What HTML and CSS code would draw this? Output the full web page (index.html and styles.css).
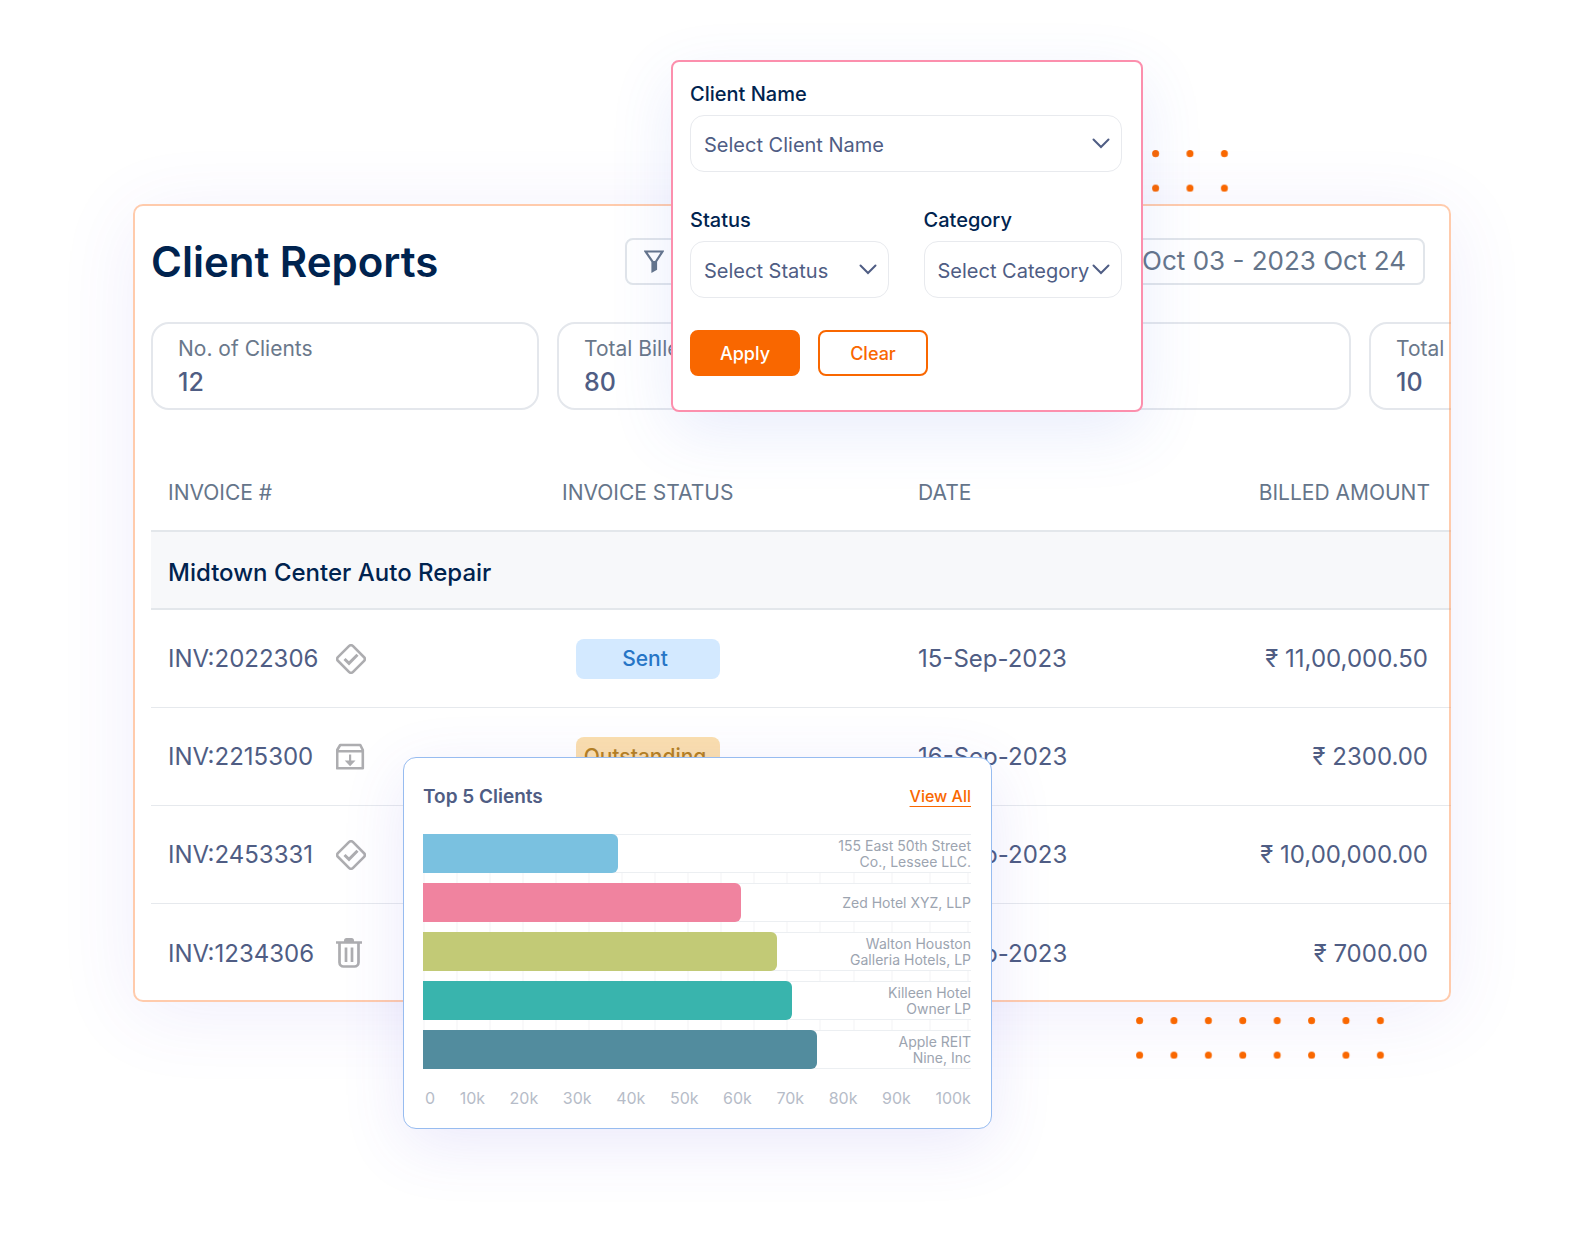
FILE: index.html
```html
<!DOCTYPE html>
<html lang="en">
<head>
<meta charset="utf-8">
<title>Client Reports</title>
<link rel="stylesheet" href="styles.css">
</head>
<body>
<svg width="0" height="0" class="sprite" aria-hidden="true">
  <symbol id="chevron" viewBox="0 0 18 11"><path d="M1.500 1.500 9 9l7.500-7.500" fill="none" stroke="currentColor" stroke-width="2" stroke-linecap="round"/></symbol>
  <symbol id="approved" viewBox="0 0 30 30"><path d="M13.200 1.900 1.900 13.200a2.500 2.500 0 0 0 0 3.600L13.200 28.100a2.500 2.500 0 0 0 3.600 0L28.100 16.800a2.500 2.500 0 0 0 0-3.600L16.800 1.900a2.500 2.500 0 0 0-3.600 0Z" fill="none" stroke="currentColor" stroke-width="2.600"/><path d="m8.500 15 4.500 4.300 8.500-8.600" fill="none" stroke="currentColor" stroke-width="3"/></symbol>
  <symbol id="archive" viewBox="0 0 30 30"><path d="M4.200 3h20.100l2.500 5v18.300H1.200V8Z M1.200 9.300h25.600" fill="none" stroke="currentColor" stroke-width="2.600" stroke-linejoin="round"/><path d="M13 12.500h2.200v6h4.300l-5.400 5.800-5.400-5.800H13Z" fill="currentColor"/></symbol>
  <symbol id="trash" viewBox="0 0 30 30"><path d="M0 4.500h26M3.500 4.500v20a4 4 0 0 0 4 4h11a4 4 0 0 0 4-4v-20M10 9.500v14.500M16 9.500v14.500" fill="none" stroke="currentColor" stroke-width="2.700"/><path d="M8 4.500V2.500A2.500 2.500 0 0 1 10.500 0h5A2.500 2.500 0 0 1 18 2.500v2Z" fill="currentColor"/></symbol>
</svg>

<main class="stage">
  <section class="report">
    <header class="report-head">
      <h1>Client Reports</h1>
      <div class="toolbar">
        <button class="tool tool-filter" type="button" aria-label="Filter">
          <svg width="20" height="23" viewBox="0 0 20 23"><path d="M1.500 1.500h17L12 11.500v7.500L8.500 21V11.500Z" fill="none" stroke="currentColor" stroke-width="2.200"/><path d="M8 11h4.500v8L8 22Z" fill="currentColor"/></svg>
        </button>
        <button class="tool" type="button">2023 Oct 03 - 2023 Oct 24</button>
      </div>
    </header>

    <div class="stats">
      <div class="stat"><span class="stat-label">No. of Clients</span><span class="stat-value">12</span></div>
      <div class="stat"><span class="stat-label">Total Billed</span><span class="stat-value">80</span></div>
      <div class="stat"></div>
      <div class="stat"><span class="stat-label">Total</span><span class="stat-value">10</span></div>
    </div>

    <table class="invoices">
      <colgroup><col class="col-invoice"><col class="col-status"><col class="col-date"><col></colgroup>
      <thead>
        <tr><th>INVOICE #</th><th>INVOICE STATUS</th><th>DATE</th><th class="amount">BILLED AMOUNT</th></tr>
      </thead>
      <tbody>
        <tr class="group"><th colspan="4">Midtown Center Auto Repair</th></tr>
        <tr>
          <td><div class="invoice"><span>INV:2022306</span><svg class="state"><use href="#approved"/></svg></div></td>
          <td><span class="badge sent">Sent</span></td><td>15-Sep-2023</td><td class="amount">₹ 11,00,000.50</td>
        </tr>
        <tr>
          <td><div class="invoice"><span>INV:2215300</span><svg class="state"><use href="#archive"/></svg></div></td>
          <td><span class="badge outstanding">Outstanding</span></td><td>16-Sep-2023</td><td class="amount">₹ 2300.00</td>
        </tr>
        <tr>
          <td><div class="invoice"><span>INV:2453331</span><svg class="state"><use href="#approved"/></svg></div></td>
          <td></td><td>16-Sep-2023</td><td class="amount">₹ 10,00,000.00</td>
        </tr>
        <tr>
          <td><div class="invoice"><span>INV:1234306</span><svg class="state"><use href="#trash"/></svg></div></td>
          <td></td><td>16-Sep-2023</td><td class="amount">₹ 7000.00</td>
        </tr>
      </tbody>
    </table>
  </section>

  <svg class="dots dots-top" width="77" height="42" aria-hidden="true">
    <defs><pattern id="dot" width="34.400" height="34.600" patternUnits="userSpaceOnUse"><circle cx="3.600" cy="3.600" r="3.500" fill="#f96700"/></pattern></defs>
    <rect width="77" height="42" fill="url(#dot)"/>
  </svg>
  <svg class="dots dots-bottom" width="249" height="42" aria-hidden="true"><rect width="249" height="42" fill="url(#dot)"/></svg>

  <form class="filters">
    <div class="field wide">
      <label for="client">Client Name</label>
      <div class="select"><select id="client"><option>Select Client Name</option></select><svg><use href="#chevron"/></svg></div>
    </div>
    <div class="field">
      <label for="status">Status</label>
      <div class="select"><select id="status"><option>Select Status</option></select><svg><use href="#chevron"/></svg></div>
    </div>
    <div class="field">
      <label for="category">Category</label>
      <div class="select"><select id="category"><option>Select Category</option></select><svg><use href="#chevron"/></svg></div>
    </div>
    <div class="actions">
      <button class="btn primary" type="button">Apply</button>
      <button class="btn" type="button">Clear</button>
    </div>
  </form>

  <section class="top-clients">
    <header class="top-head"><h2>Top 5 Clients</h2><a href="#">View All</a></header>
    <div class="bars">
      <div class="bar-row"><span class="bar blue" style="width:35.600%"></span><span class="bar-name">155 East 50th Street<br>Co., Lessee LLC.</span></div>
      <div class="bar-row"><span class="bar pink" style="width:58%"></span><span class="bar-name">Zed Hotel XYZ, LLP</span></div>
      <div class="bar-row"><span class="bar olive" style="width:64.600%"></span><span class="bar-name">Walton Houston<br>Galleria Hotels, LP</span></div>
      <div class="bar-row"><span class="bar teal" style="width:67.300%"></span><span class="bar-name">Killeen Hotel<br>Owner LP</span></div>
      <div class="bar-row"><span class="bar slate" style="width:71.900%"></span><span class="bar-name">Apple REIT<br>Nine, Inc</span></div>
    </div>
    <div class="axis"><span>0</span><span>10k</span><span>20k</span><span>30k</span><span>40k</span><span>50k</span><span>60k</span><span>70k</span><span>80k</span><span>90k</span><span>100k</span></div>
  </section>
</main>
</body>
</html>
```
FILE: styles.css
```css
* { box-sizing: border-box; }

body {
  margin: 0;
  background: #fff;
  color: #4f5d84;
  font-family: Inter, "Liberation Sans", sans-serif;
}

button, select { font: inherit; color: inherit; background: none; }

.sprite { position: absolute; }

.stage {
  position: relative;
  min-height: 100vh;
  padding: 204px 131px 237px 133px;
  overflow: hidden;
}

/* Report card: the border lies over the content so cut-off rows run under it */
.report {
  position: relative;
  padding: 34px 0 0 18px;
  border-radius: 10px;
  background: #fff;
  box-shadow: 0 12px 80px rgba(90, 70, 220, 0.09);
}
.report::after {
  content: "";
  position: absolute;
  inset: 0;
  border: 2px solid rgba(255, 140, 70, 0.45);
  border-radius: 10px;
  pointer-events: none;
}

.report-head {
  display: flex;
  justify-content: space-between;
  align-items: center;
  height: 47px;
  padding-right: 26px;
}
h1 {
  margin: 0;
  color: #00234f;
  font-size: 42px;
  line-height: 46px;
  font-weight: 600;
}
.toolbar {
  display: flex;
  justify-content: space-between;
  flex: 0 0 800px;
}
.tool {
  display: flex;
  align-items: center;
  height: 47px;
  padding: 0 17px 3px;
  border: 2px solid #e1e5ea;
  border-radius: 8px;
  color: #65758a;
  font-size: 26px;
}
.tool-filter { width: 160px; padding: 0 17px; }

.stats {
  display: flex;
  gap: 18px;
  margin-top: 37px;
  overflow: hidden;
}
.stat {
  display: flex;
  flex: 0 0 388px;
  flex-direction: column;
  height: 88px;
  padding: 9px 25px;
  border: 2px solid #e4e7ec;
  border-radius: 18px;
}
.stat-label { color: #6a788b; font-size: 21px; line-height: 32px; }
.stat-value { font-size: 25px; line-height: 34px; font-weight: 500; }

.invoices {
  width: 100%;
  margin-top: 44px;
  border-spacing: 0;
  table-layout: fixed;
  font-size: 24px;
}
.col-invoice { width: 394px; }
.col-status { width: 356px; }
.col-date { width: 250px; }
.invoices th, .invoices td {
  height: 98px;
  padding: 0 17px;
  border-bottom: 1px solid #e6e9ed;
  text-align: left;
  font-weight: 400;
}
.invoices thead th {
  height: 78px;
  border-bottom: 2px solid #e3e7eb;
  color: #65758a;
  font-size: 21px;
}
.invoices .group th {
  height: 78px;
  padding-top: 4px;
  border-bottom: 2px solid #e3e7eb;
  background: #f7f8fa;
  color: #00234f;
  font-weight: 500;
}
.invoices tbody tr:last-child td { border-bottom: 0; }
.invoices thead .amount { padding-right: 21px; text-align: right; }
.invoices td.amount { padding-right: 23px; text-align: right; }

.invoice { display: grid; grid-template-columns: 168px 30px; align-items: center; }
.state { width: 30px; height: 30px; color: #adadb0; overflow: visible; }

.badge {
  display: block;
  width: 144px;
  height: 40px;
  margin-left: 14px;
  padding-right: 6px;
  border-radius: 8px;
  font-size: 21px;
  line-height: 40px;
  font-weight: 500;
  text-align: center;
}
.sent { background: #d3e9ff; color: #2675c6; }
.outstanding { background: #fbdfae; color: #b5801f; }

.dots { position: absolute; }
.dots-top { left: 1152px; top: 150px; }
.dots-bottom { left: 1136px; top: 1017px; }

/* Filter popover */
.filters {
  position: absolute;
  left: 671px;
  top: 60px;
  display: grid;
  grid-template-columns: 1fr 1fr;
  column-gap: 35px;
  width: 472px;
  padding: 17px 19px 34px 17px;
  border: 2px solid #fc8fad;
  border-radius: 8px;
  background: #fff;
  box-shadow: 0 20px 64px rgba(70, 110, 230, 0.12);
}
.field { height: 125px; }
.field.wide { grid-column: 1 / 3; height: 126px; }
.field label {
  display: block;
  color: #00234f;
  font-size: 20px;
  line-height: 30px;
  font-weight: 500;
}
.select { position: relative; margin-top: 6px; }
.select select {
  width: 100%;
  height: 57px;
  padding: 2px 13px 0;
  border: 1px solid #e8eaee;
  border-radius: 14px;
  font-size: 20px;
  appearance: none;
}
.select svg {
  position: absolute;
  right: 12px;
  top: 23px;
  width: 18px;
  height: 11px;
  pointer-events: none;
}
.actions { display: flex; grid-column: 1 / 3; gap: 18px; }
.btn {
  width: 110px;
  height: 46px;
  border: 2px solid #f96700;
  border-radius: 8px;
  color: #f96700;
  font-size: 18px;
  font-weight: 500;
}
.btn.primary { background: #f96700; color: #fff; }

/* Top clients chart */
.top-clients {
  position: absolute;
  left: 403px;
  top: 757px;
  width: 589px;
  height: 372px;
  padding: 24px 20px 24px 19px;
  border: 1px solid #97bcf0;
  border-radius: 13px;
  background: #fff;
  box-shadow: 0 16px 64px rgba(90, 70, 220, 0.12);
}
.top-head {
  display: flex;
  justify-content: space-between;
  align-items: center;
  height: 28px;
}
h2 { margin: 0; font-size: 19px; font-weight: 600; }
.top-head a { color: #f96700; font-size: 16px; font-weight: 500; text-underline-offset: 4px; }
.bars {
  display: grid;
  gap: 10px;
  margin-top: 24px;
  background:
    repeating-linear-gradient(90deg, #f9f9fa 0 2px, transparent 2px 33px) 0 0 / 400px 100% no-repeat,
    repeating-linear-gradient(90deg, transparent 0 30px, #f9f9fa 30px 32px, transparent 32px 38px) 400px 0 / 149px 100% no-repeat;
}
.bar-row {
  display: flex;
  position: relative;
  align-items: center;
  justify-content: flex-end;
  height: 39px;
  border: solid #eceff2;
  border-width: 1px 0;
  background: #fff;
}
.bar {
  position: absolute;
  left: 0;
  top: -1px;
  bottom: -1px;
  border-radius: 0 6px 6px 0;
}
.blue { background: #7ac1e0; }
.pink { background: #f0839f; }
.olive { background: #c2ca76; }
.teal { background: #39b4ad; }
.slate { background: #528c9e; }
.bar-name { color: #9ca4b0; font-size: 14px; line-height: 16px; text-align: right; }
.axis {
  display: flex;
  justify-content: space-between;
  margin-top: 19px;
  padding-left: 2px;
  color: #b6bcc8;
  font-size: 16px;
  line-height: 20px;
}
```
